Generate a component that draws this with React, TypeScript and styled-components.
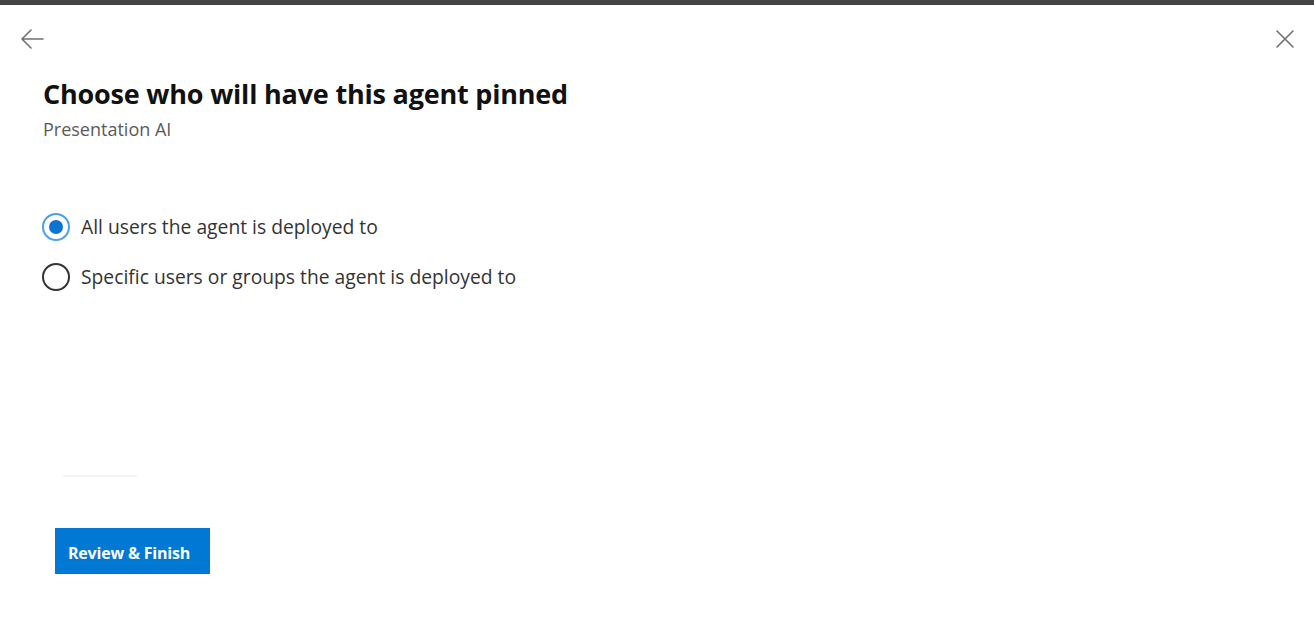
import React from "react";
import styled, { createGlobalStyle } from "styled-components";

const Global = createGlobalStyle`
  html, body { margin: 0; padding: 0; background: #ffffff; }
  body { font-family: "Open Sans", "Noto Sans", sans-serif; }
  * { box-sizing: border-box; }
`;

const Page = styled.div`
  width: 1314px;
  height: 623px;
  display: flex;
  flex-direction: column;
  background: #ffffff;
  border-top: 5px solid #454545;
  overflow: hidden;
`;

const TopBar = styled.div`
  height: 50px;
  padding: 19px 14px 0 17px;
  display: flex;
  justify-content: space-between;
  align-items: flex-start;
`;

const IconButton = styled.button`
  width: 30px;
  height: 30px;
  padding: 0;
  border: none;
  background: transparent;
  display: flex;
  align-items: center;
  justify-content: center;
  cursor: pointer;
`;

const Content = styled.div`
  padding: 22px 0 0 43px;
  display: flex;
  flex-direction: column;
  flex: 1;
`;

const Title = styled.h1`
  margin: 0;
  font-family: "Open Sans", sans-serif;
  font-weight: 700;
  font-size: 27px;
  line-height: 34px;
  color: #111111;
  letter-spacing: -0.2px;
`;

const Subtitle = styled.div`
  margin-top: 6px;
  font-size: 18px;
  line-height: 24px;
  color: #5a5a5a;
`;

const RadioGroup = styled.div`
  margin-top: 72px;
  display: flex;
  flex-direction: column;
  gap: 22px;
`;

const RadioRow = styled.label`
  display: flex;
  align-items: center;
  gap: 11px;
  cursor: pointer;
  margin-left: -1px;
`;

const RadioCircle = styled.span<{ $checked?: boolean }>`
  width: 28px;
  height: 28px;
  border-radius: 50%;
  border: 2px solid ${(p) => (p.$checked ? "#4aa0ea" : "#333333")};
  display: flex;
  align-items: center;
  justify-content: center;
  flex: none;
  &::after {
    content: "";
    width: 14px;
    height: 14px;
    border-radius: 50%;
    background: #0a74d0;
    display: ${(p) => (p.$checked ? "block" : "none")};
  }
`;

const RadioText = styled.span`
  font-size: 19.3px;
  line-height: 28px;
  color: #333333;
`;

const Spacer = styled.div`
  flex: 1;
`;

const Footer = styled.div`
  padding: 0 0 49px 12px;
  display: flex;
  flex-direction: column;
  gap: 51px;
`;

const GhostLine = styled.div`
  margin-left: 8px;
  width: 74px;
  height: 2px;
  background: #f4f4f4;
`;

const PrimaryButton = styled.button`
  width: 155px;
  height: 46px;
  border: none;
  background: #0078d4;
  color: #ffffff;
  font-family: "Open Sans", sans-serif;
  font-weight: 700;
  font-size: 16px;
  letter-spacing: -0.2px;
  padding: 3px 0 0 13px;
  text-align: left;
  cursor: pointer;
`;

export default function App() {
  return (
    <>
      <Global />
      <Page>
        <TopBar>
          <IconButton aria-label="Back">
            <svg width="26" height="22" viewBox="0 0 26 22" fill="none">
              <path d="M24 11H3M12 2L3 11L12 20" stroke="#707070" strokeWidth="1.6" strokeLinecap="round" strokeLinejoin="round" />
            </svg>
          </IconButton>
          <IconButton aria-label="Close">
            <svg width="20" height="20" viewBox="0 0 20 20" fill="none">
              <path d="M2 2L18 18M18 2L2 18" stroke="#707070" strokeWidth="1.6" strokeLinecap="round" />
            </svg>
          </IconButton>
        </TopBar>
        <Content>
          <Title>Choose who will have this agent pinned</Title>
          <Subtitle>Presentation AI</Subtitle>
          <RadioGroup>
            <RadioRow>
              <RadioCircle $checked />
              <RadioText>All users the agent is deployed to</RadioText>
            </RadioRow>
            <RadioRow>
              <RadioCircle />
              <RadioText>Specific users or groups the agent is deployed to</RadioText>
            </RadioRow>
          </RadioGroup>
          <Spacer />
          <Footer>
            <GhostLine />
            <PrimaryButton>Review &amp; Finish</PrimaryButton>
          </Footer>
        </Content>
      </Page>
    </>
  );
}
